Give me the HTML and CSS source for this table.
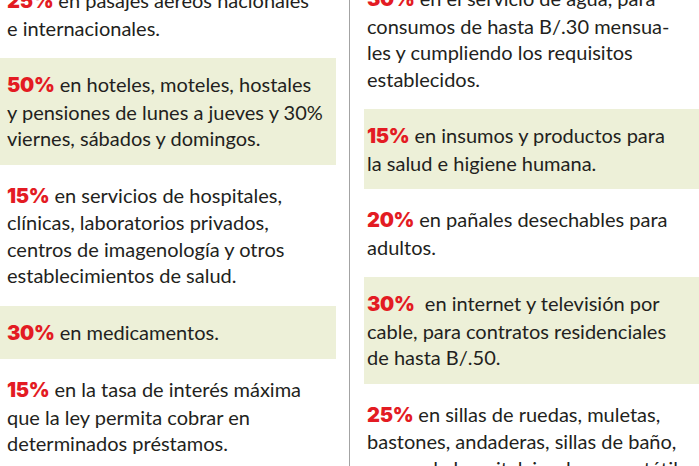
FILE: index.html
```html
<!DOCTYPE html>
<html lang="es">
<head>
<meta charset="utf-8">
<link rel="stylesheet" href="styles.css">
</head>
<body>
<div class="page">
  <div class="col col-left">
    <p class="item"><span class="pct">25%</span> en pasajes aéreos nacionales<br>e internacionales.</p>
    <p class="item alt"><span class="pct">50%</span> en hoteles, moteles, hostales<br>y pensiones de lunes a jueves y 30%<br>viernes, sábados y domingos.</p>
    <p class="item"><span class="pct">15%</span> en servicios de hospitales,<br>clínicas, laboratorios privados,<br>centros de imagenología y otros<br>establecimientos de salud.</p>
    <p class="item alt"><span class="pct">30%</span> en medicamentos.</p>
    <p class="item"><span class="pct">15%</span> en la tasa de interés máxima<br>que la ley permita cobrar en<br>determinados préstamos.</p>
  </div>
  <div class="col col-right">
    <p class="item"><span class="pct">30%</span> en el servicio de agua, para<br>consumos de hasta B/.30 mensua-<br>les y cumpliendo los requisitos<br>establecidos.</p>
    <p class="item alt"><span class="pct">15%</span> en insumos y productos para<br>la salud e higiene humana.</p>
    <p class="item"><span class="pct">20%</span> en pañales desechables para<br>adultos.</p>
    <p class="item alt"><span class="pct">30%</span>&nbsp; en internet y televisión por<br>cable, para contratos residenciales<br>de hasta B/.50.</p>
    <p class="item"><span class="pct">25%</span> en sillas de ruedas, muletas,<br>bastones, andaderas, sillas de baño,<br>camas de hospital, inodoros portátiles</p>
  </div>
</div>
</body>
</html>
```
FILE: styles.css
```css
html, body {
  margin: 0;
  padding: 0;
  background: #ffffff;
  overflow: hidden;
}
body {
  font-family: "Lato", "Noto Sans", sans-serif;
  font-size: 20px;
  line-height: 26.5px;
  color: #231f20;
}
.page {
  display: flex;
  align-items: stretch;
  margin-top: -26px;
  min-height: 520px;
}
.col {
  display: flex;
  flex-direction: column;
  gap: 4px;
}
.col-left {
  width: 336px;
  flex: none;
}
.col-right {
  flex: 1;
  margin-left: 13px;
  border-left: 1.5px solid #a3a3a3;
  padding-left: 14px;
  padding-top: 0;
  margin-top: -2px;
}
.item {
  margin: 0;
  padding: 13px 0 13px 7px;
  white-space: nowrap;
}
.col-right .item {
  padding-left: 3px;
}
.item.alt {
  background: #edf0d8;
}
.pct {
  font-family: "Inter", "Lato", sans-serif;
  font-weight: 900;
  color: #e31b23;
  letter-spacing: -0.3px;
}
```
